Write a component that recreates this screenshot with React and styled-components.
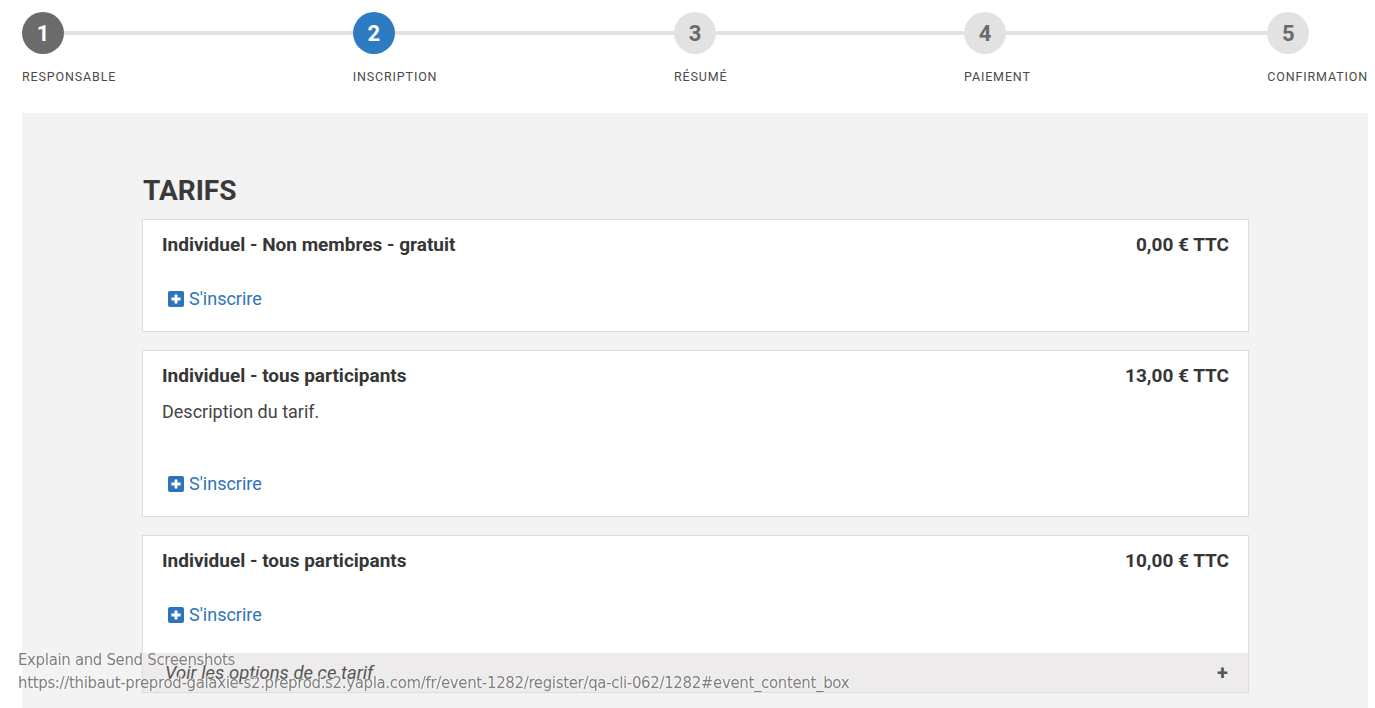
import React from "react"
import styled, { createGlobalStyle, css } from "styled-components"

const GlobalStyle = createGlobalStyle`
  * { box-sizing: border-box; }
  body {
    margin: 0;
    font-family: Roboto, "Liberation Sans", sans-serif;
    background: #fff;
    color: #333;
  }
`

const steps = [
  { n: 1, label: "RESPONSABLE", state: "done" },
  { n: 2, label: "INSCRIPTION", state: "active" },
  { n: 3, label: "RÉSUMÉ", state: "todo" },
  { n: 4, label: "PAIEMENT", state: "todo" },
  { n: 5, label: "CONFIRMATION", state: "todo" },
]

const tarifs = [
  { title: "Individuel - Non membres - gratuit", price: "0,00 € TTC" },
  {
    title: "Individuel - tous participants",
    price: "13,00 € TTC",
    description: "Description du tarif.",
  },
  {
    title: "Individuel - tous participants",
    price: "10,00 € TTC",
    options: true,
  },
]

const PlusSquare = () => (
  <svg width="16" height="16" viewBox="0 0 16 16">
    <rect x="0" y="0" width="16" height="16" rx="2" fill="#2d74b8" />
    <path d="M6.6 3.4h2.8v3.2h3.2v2.8H9.4v3.2H6.6V9.4H3.4V6.6h3.2z" fill="#fff" />
  </svg>
)

const TarifCard = ({ title, price, description, options }) => (
  <Card>
    <CardBody>
      <CardHead>
        <CardTitle>{title}</CardTitle>
        <Price>{price}</Price>
      </CardHead>
      {description && <Description>{description}</Description>}
      <RegisterLink hasDescription={!!description} compact={options}>
        <PlusSquare />
        <span>S'inscrire</span>
      </RegisterLink>
    </CardBody>
    {options && (
      <OptionsBar>
        <span>Voir les options de ce tarif</span>
        <OptionsPlus>+</OptionsPlus>
      </OptionsBar>
    )}
  </Card>
)

const App = () => (
  <Page>
    <GlobalStyle />
    <Stepper>
      {steps.map((s) => (
        <Step key={s.n}>
          <Circle state={s.state}>{s.n}</Circle>
          <StepLabel>{s.label}</StepLabel>
        </Step>
      ))}
    </Stepper>
    <Panel>
      <Content>
        <Heading>TARIFS</Heading>
        <CardList>
          {tarifs.map((t, i) => (
            <TarifCard key={i} {...t} />
          ))}
        </CardList>
      </Content>
    </Panel>
    <ScreenshotHint>
      <div>Explain and Send Screenshots</div>
      <div>https://thibaut-preprod-galaxie-s2.preprod.s2.yapla.com/fr/event-1282/register/qa-cli-062/1282#event_content_box</div>
    </ScreenshotHint>
  </Page>
)

const Page = styled.div`
  position: relative;
  height: 708px;
  overflow: hidden;
  padding: 12px 7px 0 22px;
`

const Stepper = styled.div`
  position: relative;
  display: flex;
  justify-content: space-between;

  &::before {
    content: "";
    position: absolute;
    left: 21px;
    right: 78px;
    top: 19px;
    height: 4px;
    background: #e2e2e2;
  }
`

const Step = styled.div`
  position: relative;
  display: flex;
  flex-direction: column;
  align-items: flex-start;
`

const Circle = styled.div`
  width: 42px;
  height: 42px;
  border-radius: 50%;
  display: flex;
  align-items: center;
  justify-content: center;
  font-size: 22px;
  font-weight: 700;
  background: #e2e2e2;
  color: #6a6a6a;

  ${({ state }) =>
    state === "done" &&
    css`
      background: #6b6b6b;
      color: #fff;
    `}
  ${({ state }) =>
    state === "active" &&
    css`
      background: #2d7bc2;
      color: #fff;
    `}
`

const StepLabel = styled.div`
  margin-top: 15px;
  font-size: 12.5px;
  letter-spacing: 0.85px;
  color: #4a4a4a;
  white-space: nowrap;
`

const Panel = styled.div`
  margin-top: 29px;
  background: #f3f3f3;
  height: 600px;
`

const Content = styled.div`
  width: 1107px;
  margin-left: 120px;
  padding-top: 62px;
`

const Heading = styled.h2`
  margin: 0 0 12px 1px;
  font-size: 28px;
  line-height: 32px;
  font-weight: 700;
  color: #3a3a3a;
`

const CardList = styled.div`
  display: flex;
  flex-direction: column;
  gap: 18px;
`

const Card = styled.div`
  background: #fff;
  border: 1px solid #dcdcdc;
`

const CardBody = styled.div`
  padding: 15px 19px 20px 19px;
`

const CardHead = styled.div`
  display: flex;
  justify-content: space-between;
  align-items: center;
`

const CardTitle = styled.div`
  font-size: 19px;
  line-height: 20px;
  font-weight: 700;
  color: #363636;
`

const Price = styled.div`
  font-size: 19px;
  line-height: 20px;
  font-weight: 700;
  color: #363636;
`

const Description = styled.p`
  margin: 16px 0 0;
  font-size: 18px;
  line-height: 20px;
  color: #454545;
`

const RegisterLink = styled.a`
  display: inline-flex;
  align-items: center;
  gap: 5px;
  margin: 34px 0 0 6px;
  font-size: 18px;
  line-height: 20px;
  color: #2d74b8;
  cursor: pointer;

  ${({ hasDescription }) =>
    hasDescription &&
    css`
      margin-top: 52px;
    `}
  ${({ compact }) =>
    compact &&
    css`
      margin-bottom: 8px;
    `}
`

const OptionsBar = styled.div`
  display: flex;
  justify-content: space-between;
  align-items: center;
  height: 39px;
  padding: 0 20px 0 22px;
  background: #edebeb;
  font-size: 18.5px;
  font-style: italic;
  color: #555;
`

const OptionsPlus = styled.span`
  font-style: normal;
  font-weight: 700;
  font-size: 20px;
  color: #555;
`

const ScreenshotHint = styled.div`
  position: absolute;
  left: 18px;
  top: 648px;
  font-family: "Liberation Sans Narrow", "DejaVu Sans Condensed", "Liberation Sans", sans-serif;
  font-size: 16.5px;
  line-height: 23px;
  color: #7e7e7e;
  letter-spacing: -0.27px;
  text-shadow: 0 0 1px #fff, 0 0 1px #fff, 1px 0 0 #fff, -1px 0 0 #fff;
  pointer-events: none;
  white-space: nowrap;
`

export default App
